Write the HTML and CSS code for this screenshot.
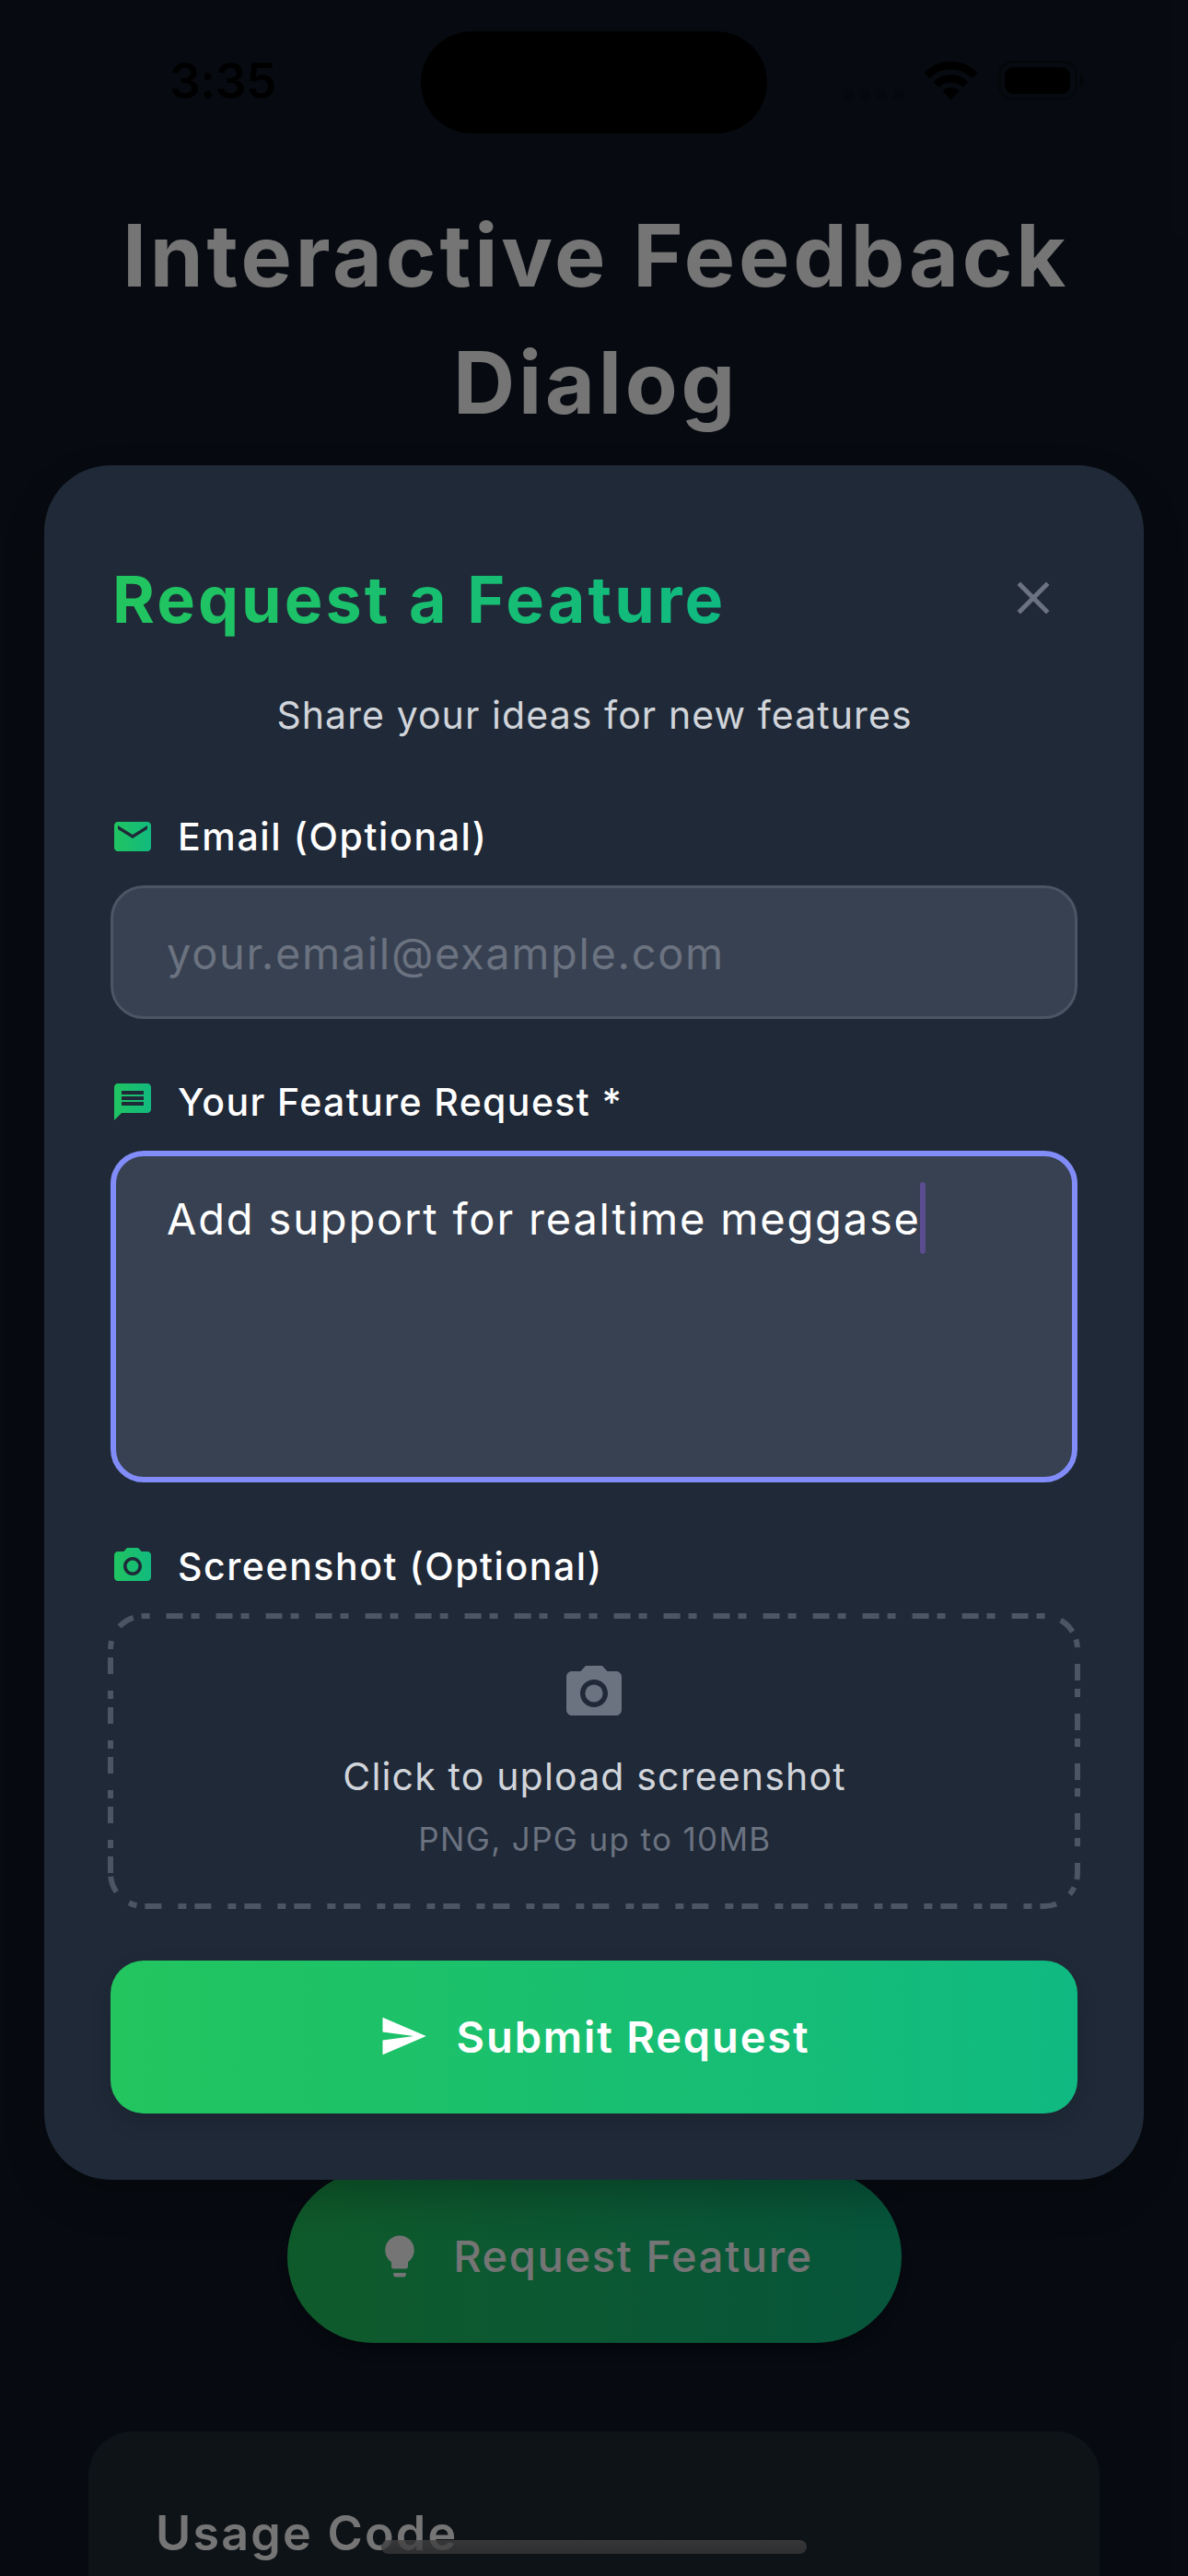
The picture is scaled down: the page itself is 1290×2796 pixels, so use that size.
FILE: index.html
```html
<!DOCTYPE html>
<html lang="en">
<head>
<meta charset="utf-8">
<title>Interactive Feedback Dialog</title>
<link rel="stylesheet" href="styles.css">
</head>
<body>
<div class="screen">
  <main class="page">
    <h1 class="page-title">Interactive Feedback Dialog</h1>
    <div class="page-bottom">
      <button class="request-button">
        <svg class="icon-54" viewBox="0 0 24 24" fill="currentColor"><path d="M9 21c0 .55.45 1 1 1h4c.55 0 1-.45 1-1v-1H9v1zm3-19C8.14 2 5 5.14 5 9c0 2.38 1.19 4.47 3 5.74V17c0 .55.45 1 1 1h6c.55 0 1-.45 1-1v-2.26c1.81-1.27 3-3.36 3-5.74 0-3.86-3.140-7-7-7z"/></svg>
        <span>Request Feature</span>
      </button>
      <section class="code-card"><h2 class="code-title">Usage Code</h2></section>
    </div>
  </main>

  <div class="scrim"></div>

  <header class="status-bar">
    <div class="time">3:35</div>
    <div class="island"></div>
    <div class="status-icons">
      <svg width="262" height="44" viewBox="0 0 262 44">
        <g fill="#05080d"><rect x="1" y="31" width="11" height="12" rx="4"/><rect x="19" y="31" width="11" height="12" rx="4"/><rect x="37" y="31" width="11" height="12" rx="4"/><rect x="55" y="31" width="11" height="12" rx="4"/></g>
        <g fill="#000">
          <path d="M117.500 0.500C128 0.500 138 4.800 145.500 12q1 1 0 2L141.500 18q-1 1-2 0C133.500 12.500 126 9.300 117.500 9.300S101.500 12.500 95.500 18q-1 1-2 0L89.500 14q-1-1 0-2C97 4.800 107 0.500 117.500 0.500Z"/>
          <path d="M117.500 15C124.500 15 131 17.700 135.500 22q1 1 0 2L131.500 28q-1 1-2 0C126 25 122 23.500 117.500 23.500S109 25 105.500 28q-1 1-2 0L99.500 24q-1-1 0-2C104 17.700 110.500 15 117.500 15Z"/>
          <path d="M117.500 29C120.700 29 123.600 30.200 125.700 32q1 1 0 2L118.400 41.500q-.9.900-1.800 0L109.300 34q-1-1 0-2C111.400 30.200 114.300 29 117.500 29Z"/>
          <rect x="176" y="7" width="71" height="29" rx="9"/>
        </g>
        <rect x="170.500" y="1.500" width="83" height="40" rx="13" fill="none" stroke="#05070b" stroke-width="3"/>
        <path d="M257 14c3.500 1 5 4 5 7.500s-1.500 6.500-5 7.500z" fill="#04060a"/>
      </svg>
    </div>
  </header>

  <section class="dialog" role="dialog">
    <div class="dialog-header">
      <h2 class="dialog-title">Request a Feature</h2>
      <div class="close">
        <svg width="60" height="60" viewBox="0 0 24 24" fill="currentColor"><path d="M19 6.410L17.590 5 12 10.590 6.410 5 5 6.410 10.590 12 5 17.590 6.410 19 12 13.410 17.590 19 19 17.590 13.410 12z"/></svg>
      </div>
    </div>
    <p class="subtitle">Share your ideas for new features</p>

    <div class="label label-email">
      <svg width="48" height="48" viewBox="0 0 24 24">
        <defs><linearGradient id="green" gradientUnits="userSpaceOnUse" x1="0" y1="0" x2="24" y2="0"><stop offset="0" stop-color="#22c55e"/><stop offset="1" stop-color="#10b981"/></linearGradient></defs>
        <path fill="url(#green)" d="M20 4H4c-1.100 0-1.990.9-1.990 2L2 18c0 1.100.9 2 2 2h16c1.100 0 2-.9 2-2V6c0-1.100-.9-2-2-2zm0 4l-8 5-8-5V6l8 5 8-5v2z"/>
      </svg>
      <span>Email (Optional)</span>
    </div>
    <div class="field"><span>your.email@example.com</span></div>

    <div class="label label-request">
      <svg width="48" height="48" viewBox="0 0 24 24"><path fill="url(#green)" d="M20 2H4c-1.100 0-1.990.9-1.990 2L2 22l4-4h14c1.100 0 2-.9 2-2V4c0-1.100-.9-2-2-2zM6 9h12v2H6V9zm12 5H6v-2h12v2zm0-6H6V6h12v2z"/></svg>
      <span>Your Feature Request *</span>
    </div>
    <div class="textarea"><span>Add support for realtime meggase</span><i class="cursor"></i></div>

    <div class="label label-shot">
      <svg width="48" height="48" viewBox="0 0 24 24"><g fill="url(#green)"><circle cx="12" cy="12" r="3.200"/><path d="M9 2L7.170 4H4c-1.100 0-2 .9-2 2v12c0 1.100.9 2 2 2h16c1.100 0 2-.9 2-2V6c0-1.100-.9-2-2-2h-3.170L15 2H9zm3 15c-2.760 0-5-2.240-5-5s2.240-5 5-5 5 2.240 5 5-2.240 5-5 5z"/></g></svg>
      <span>Screenshot (Optional)</span>
    </div>
    <div class="upload">
      <svg class="upload-border" width="1050" height="315" viewBox="0 0 1050 315"><path d="M0 279V36A36 36 0 0 1 36 0H1014A36 36 0 0 1 1050 36V279A36 36 0 0 1 1014 315H36A36 36 0 0 1 0 279Z" fill="none" stroke="#4b5563" stroke-width="6" stroke-dasharray="18 9 9 18"/></svg>
      <svg class="upload-icon" width="72" height="72" viewBox="0 0 24 24" fill="currentColor"><circle cx="12" cy="12" r="3.200"/><path d="M9 2L7.170 4H4c-1.100 0-2 .9-2 2v12c0 1.100.9 2 2 2h16c1.100 0 2-.9 2-2V6c0-1.100-.9-2-2-2h-3.170L15 2H9zm3 15c-2.760 0-5-2.240-5-5s2.240-5 5-5 5 2.240 5 5-2.240 5-5 5z"/></svg>
      <div class="upload-text">Click to upload screenshot</div>
      <div class="upload-hint">PNG, JPG up to 10MB</div>
    </div>

    <button class="submit">
      <svg class="icon-54" viewBox="0 0 24 24" fill="currentColor"><path d="M2.010 21L23 12 2.010 3 2 10l15 2-15 2z"/></svg>
      <span>Submit Request</span>
    </button>
  </section>

  <div class="home-indicator"></div>
</div>
</body>
</html>
```
FILE: styles.css
```css
* { box-sizing: border-box; }

body { margin: 0; background: #080b12; }

h1, h2, p { margin: 0; }

svg { display: block; flex: none; }

button { border: 0; padding: 0; font: inherit; color: inherit; }

.screen {
  position: relative;
  width: 1290px;
  height: 2796px;
  overflow: hidden;
  font-family: Inter, "Liberation Sans", sans-serif;
  color: #fff;
}

/* Page behind the dialog */
.page {
  height: 2796px;
  padding: 208px 96px 0;
  background: #111827;
  display: flex;
  flex-direction: column;
  justify-content: space-between;
}

.page-title {
  padding-left: 4px;
  font-size: 93px;
  font-weight: 700;
  line-height: 138px;
  letter-spacing: 3.8px;
  text-align: center;
}

.page-bottom {
  height: 440px;
  display: flex;
  flex-direction: column;
  align-items: center;
}

.request-button {
  width: 667px;
  height: 187px;
  flex: none;
  padding-bottom: 2px;
  display: flex;
  align-items: center;
  justify-content: center;
  gap: 31px;
  border-radius: 94px;
  background: linear-gradient(90deg, #22c55e, #10b981);
  box-shadow: 0 12px 24px rgba(0, 0, 0, .35);
  font-size: 47px;
  font-weight: 500;
  letter-spacing: 1.64px;
}

.icon-54 { width: 54px; height: 54px; }

.code-card {
  width: 1098px;
  height: 220px;
  flex: none;
  margin-top: 96px;
  padding: 75px 73px;
  border-radius: 48px 48px 0 0;
  background: #1f2a36;
}

.code-title {
  font-size: 52px;
  font-weight: 600;
  line-height: 72px;
  letter-spacing: 2.22px;
}

.scrim {
  position: absolute;
  inset: 0;
  background: rgba(0, 0, 0, .54);
}

/* Status bar */
.status-bar {
  position: absolute;
  inset: 0 0 auto;
  height: 178px;
  padding: 0 113px 0 184px;
  display: flex;
  align-items: center;
  color: #000;
}

.time {
  width: 150px;
  padding-bottom: 2px;
  font-size: 53px;
  font-weight: 600;
  letter-spacing: -.45px;
  white-space: nowrap;
}

.island {
  width: 376px;
  height: 111px;
  margin-left: 123px;
  border-radius: 56px;
  background: #000;
}

.status-icons {
  margin-left: auto;
  padding-bottom: 2px;
}

/* Dialog */
.dialog {
  position: absolute;
  left: 48px;
  top: 505px;
  width: 1194px;
  height: 1861px;
  padding: 72px;
  border-radius: 72px;
  background: #1f2937;
  box-shadow: 0 20px 44px rgba(0, 0, 0, .24);
}

.dialog-header {
  height: 144px;
  display: flex;
  align-items: center;
  justify-content: space-between;
}

.dialog-title {
  padding: 4px 0 0 2px;
  font-size: 70px;
  font-weight: 700;
  line-height: 96px;
  letter-spacing: 3.04px;
  color: transparent;
  background: linear-gradient(90deg, #22c55e, #10b981);
  -webkit-background-clip: text;
  background-clip: text;
}

.close {
  width: 96px;
  display: flex;
  justify-content: center;
  color: #6b7280;
}

.subtitle {
  margin-top: 25px;
  padding-left: 1px;
  font-size: 41px;
  line-height: 60px;
  letter-spacing: 1.08px;
  text-align: center;
  color: #d1d5db;
}

.label {
  height: 48px;
  display: flex;
  align-items: center;
  gap: 25px;
  font-size: 41px;
  font-weight: 500;
  line-height: 48px;
}

.label-email { margin-top: 78px; letter-spacing: 1.62px; }

.label-request { margin-top: 66px; letter-spacing: 1.38px; }

.label-shot { margin-top: 67px; letter-spacing: 1.55px; }

.field {
  height: 145px;
  margin-top: 29px;
  padding: 1px 58px 0;
  display: flex;
  align-items: center;
  border: 3px solid #4b5563;
  border-radius: 36px;
  background: #374151;
  color: #6b7280;
  font-size: 47px;
  letter-spacing: 1.64px;
}

.textarea {
  height: 360px;
  margin-top: 29px;
  padding: 32px 55px;
  display: flex;
  align-items: flex-start;
  border: 6px solid #818cf8;
  border-radius: 36px;
  background: #374151;
  font-size: 47px;
  line-height: 72px;
  letter-spacing: 1.83px;
  white-space: nowrap;
}

.cursor {
  width: 6px;
  height: 78px;
  margin: -4px 0 0 -1px;
  border-radius: 3px;
  background: #5b4b8f;
}

.upload {
  position: relative;
  height: 315px;
  margin-top: 29.5px;
  padding-top: 48.5px;
  display: flex;
  flex-direction: column;
  align-items: center;
}

.upload-border {
  position: absolute;
  inset: 0;
  overflow: visible;
}

.upload-icon { color: #6b7280; }

.upload-text {
  margin-top: 24px;
  padding-left: 1px;
  font-size: 41px;
  line-height: 60px;
  letter-spacing: 1.17px;
  color: #d1d5db;
}

.upload-hint {
  margin-top: 14px;
  padding-left: 2px;
  font-size: 35px;
  line-height: 48px;
  letter-spacing: 1.34px;
  color: #6b7280;
}

.submit {
  width: 100%;
  height: 166px;
  margin-top: 59.5px;
  padding-bottom: 2px;
  display: flex;
  align-items: center;
  justify-content: center;
  gap: 31px;
  border-radius: 36px;
  background: linear-gradient(90deg, #22c55e, #10b981);
  box-shadow: 0 10px 24px rgba(0, 0, 0, .1);
  font-size: 47px;
  font-weight: 600;
  letter-spacing: 1.85px;
}

.home-indicator {
  position: absolute;
  left: 414px;
  top: 2757px;
  width: 462px;
  height: 15px;
  border-radius: 8px;
  background: linear-gradient(rgba(66, 65, 65, .78), rgba(54, 54, 56, .78));
}
```
